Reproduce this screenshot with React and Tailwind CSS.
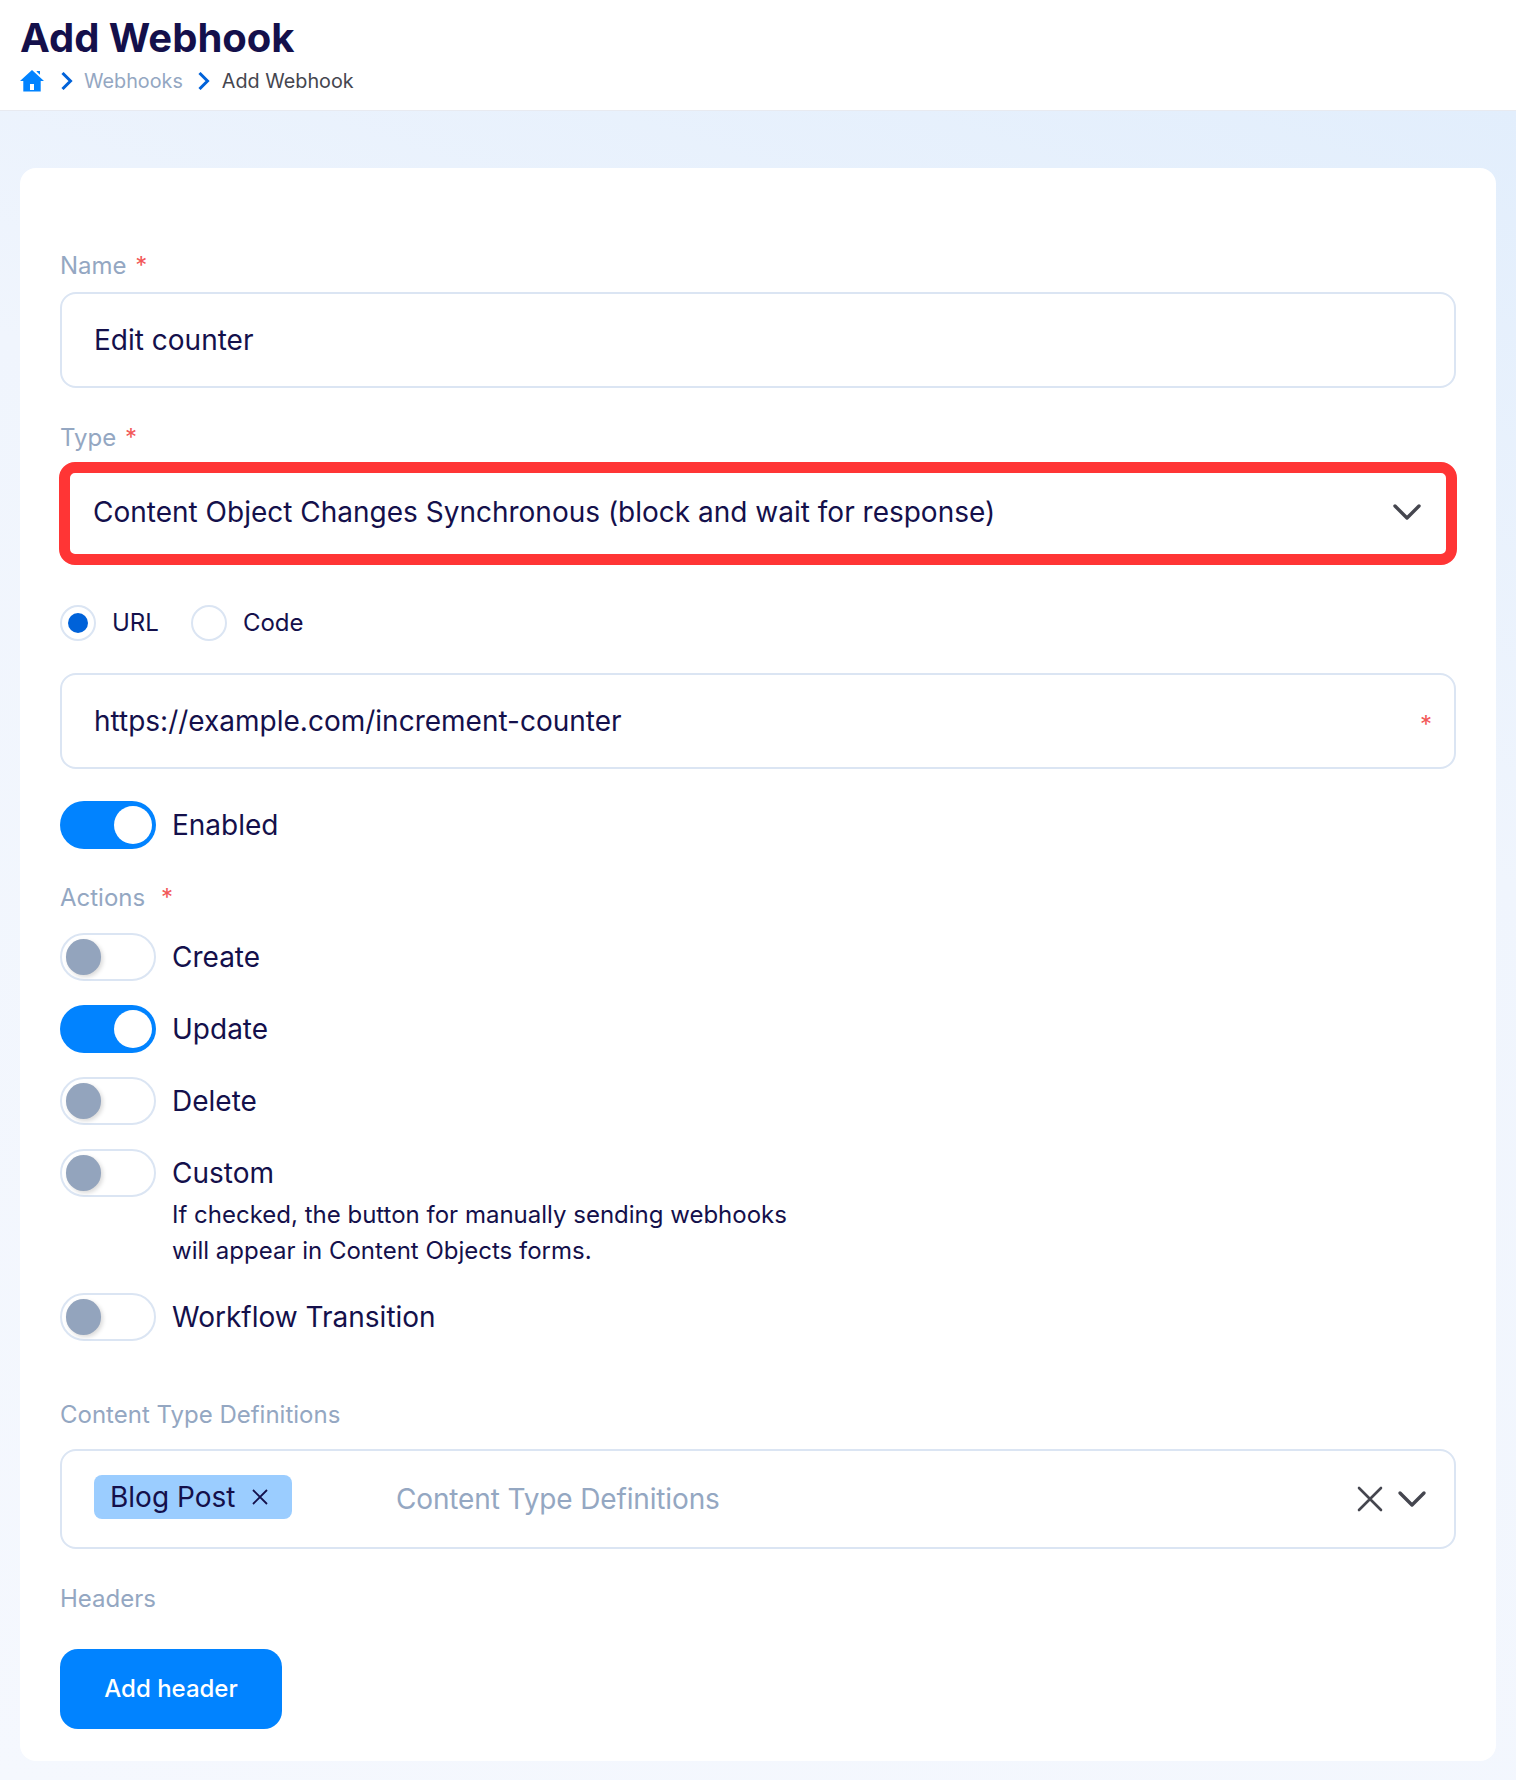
const Label = ({ children, className = "" }) => (
  <div className={`text-[24px] leading-[32px] text-[#94a7c2] ${className}`}>{children}</div>
);

const Star = ({ className = "" }) => <span className={`text-[#f25858] ${className}`}>*</span>;

const Chevron = ({ className = "" }) => (
  <svg viewBox="0 0 30 18" fill="none" className={className}>
    <path d="M3 3l12 12L27 3" stroke="#45464f" strokeWidth="3.4" strokeLinecap="round" strokeLinejoin="round" />
  </svg>
);

const Crumb = () => (
  <svg viewBox="0 0 12 18" fill="none" className="w-[12px] h-[18px]">
    <path d="M1.500 1l8 8-8 8" stroke="#0062d9" strokeWidth="3" />
  </svg>
);

const HomeIcon = () => (
  <svg viewBox="0 0 24 22" className="w-[24px] h-[22px]">
    <path
      fillRule="evenodd"
      d="M12 0L0 11h3.300v10.500h17.400V11H24L12 0zM10 14h4v6h-4z"
      fill="#0183ff"
    />
    <path d="M16.700 1h3.300v3.800l-3.300-3z" fill="#0183ff" />
  </svg>
);

function Toggle({ on }) {
  return on ? (
    <div className="w-[96px] h-[48px] shrink-0 rounded-full bg-[#0183ff] flex items-center justify-end pr-[4px]">
      <div className="w-[38px] h-[38px] rounded-full bg-white" />
    </div>
  ) : (
    <div className="w-[96px] h-[48px] shrink-0 rounded-full border-2 border-[#dbe5f3] bg-white flex items-center pl-[4px]">
      <div className="w-[35px] h-[36px] rounded-full bg-[#93a4bd] shadow-[2px_2px_4px_rgba(0,0,0,0.15)]" />
    </div>
  );
}

function ToggleRow({ on, label, className = "" }) {
  return (
    <div className={`flex items-center gap-[16px] ${className}`}>
      <Toggle on={on} />
      <span className="text-[28px] leading-[40px] text-[#14104b]">{label}</span>
    </div>
  );
}

export default function App() {
  return (
    <div className="w-[1516px] h-[1780px] font-['Inter',sans-serif] bg-[linear-gradient(200deg,#e0edfc_0%,#f0f5fd_38%,#f5f8fe_100%)]">
      <header className="h-[111px] bg-white border-b border-[#e8eaf0] pl-[20px] pt-[12px]">
        <h1 className="text-[40px] leading-[52px] font-bold text-[#14104b]">Add Webhook</h1>
        <div className="flex items-center mt-[2px] text-[19.800px] leading-[30px]">
          <HomeIcon />
          <span className="ml-[17px]"><Crumb /></span>
          <span className="ml-[11px] text-[#94a7c2]">Webhooks</span>
          <span className="ml-[15px]"><Crumb /></span>
          <span className="ml-[12px] text-[#45464f]">Add Webhook</span>
        </div>
      </header>

      <main className="px-[20px] pt-[57px]">
        <div className="bg-white rounded-[16px] h-[1593px] px-[40px] pt-[82px]">
          <Label>
            Name <Star className="ml-[2px]" />
          </Label>
          <div className="mt-[10px] h-[96px] rounded-[16px] border-2 border-[#dbe5f3] flex items-center pl-[32px] text-[28px] text-[#14104b]">
            Edit counter
          </div>

          <Label className="mt-[34px]">
            Type <Star className="ml-[2px]" />
          </Label>
          <div className="mt-[8px] -mx-[1px] h-[103px] rounded-[16px] border-[11px] border-[#ff3535] flex items-center justify-between pl-[23px] pr-[24px] pb-[3px] text-[28px] text-[#14104b]">
            <span>Content Object Changes Synchronous (block and wait for response)</span>
            <Chevron className="w-[30px] h-[18px]" />
          </div>

          <div className="mt-[40px] flex items-center text-[24px] leading-[36px] text-[#14104b]">
            <div className="w-[36px] h-[36px] rounded-full border-2 border-[#dbe5f3] flex items-center justify-center">
              <div className="w-[20px] h-[20px] rounded-full bg-[#0062d9]" />
            </div>
            <span className="ml-[16px]">URL</span>
            <div className="ml-[32px] w-[36px] h-[36px] rounded-full border-2 border-[#dbe5f3]" />
            <span className="ml-[16px]">Code</span>
          </div>

          <div className="mt-[32px] relative h-[96px] rounded-[16px] border-2 border-[#dbe5f3] flex items-center pl-[32px] text-[28px] text-[#14104b]">
            https://example.com/increment-counter
            <span className="absolute right-[22px] top-[34px] text-[24px] leading-[32px] text-[#f25858]">*</span>
          </div>

          <ToggleRow on label="Enabled" className="mt-[32px]" />

          <Label className="mt-[33px]">
            Actions <Star className="ml-[9px]" />
          </Label>

          <ToggleRow label="Create" className="mt-[19px]" />
          <ToggleRow on label="Update" className="mt-[24px]" />
          <ToggleRow label="Delete" className="mt-[24px]" />
          <ToggleRow label="Custom" className="mt-[24px]" />
          <p className="ml-[112px] text-[24px] leading-[36px] text-[#14104b]">
            If checked, the button for manually sending webhooks
            <br />
            will appear in Content Objects forms.
          </p>
          <ToggleRow label="Workflow Transition" className="mt-[24px]" />

          <Label className="mt-[58px]">Content Type Definitions</Label>
          <div className="mt-[18px] h-[100px] rounded-[16px] border-2 border-[#dbe5f3] flex items-center pl-[32px] pr-[27px] text-[28px]">
            <div className="flex items-center w-[198px] h-[44px] mb-[4px] rounded-[8px] bg-[#9bcdff] pl-[16px] text-[#14104b]">
              Blog Post
              <svg viewBox="0 0 18 18" fill="none" className="w-[18px] h-[18px] ml-[16px]">
                <path d="M2 2l14 14M16 2L2 16" stroke="#14104b" strokeWidth="1.800" />
              </svg>
            </div>
            <span className="ml-[104px] text-[#94a7c2] tracking-[-0.14px]">Content Type Definitions</span>
            <svg viewBox="0 0 26 26" fill="none" className="ml-auto w-[26px] h-[26px]">
              <path d="M2 2l22 22M24 2L2 24" stroke="#45464f" strokeWidth="2.600" strokeLinecap="round" />
            </svg>
            <Chevron className="ml-[14px] w-[30px] h-[18px]" />
          </div>

          <Label className="mt-[34px]">Headers</Label>
          <button className="mt-[34px] w-[222px] h-[80px] rounded-[18px] bg-[#0183ff] text-white text-[24px] font-medium">
            Add header
          </button>
        </div>
      </main>
    </div>
  );
}
